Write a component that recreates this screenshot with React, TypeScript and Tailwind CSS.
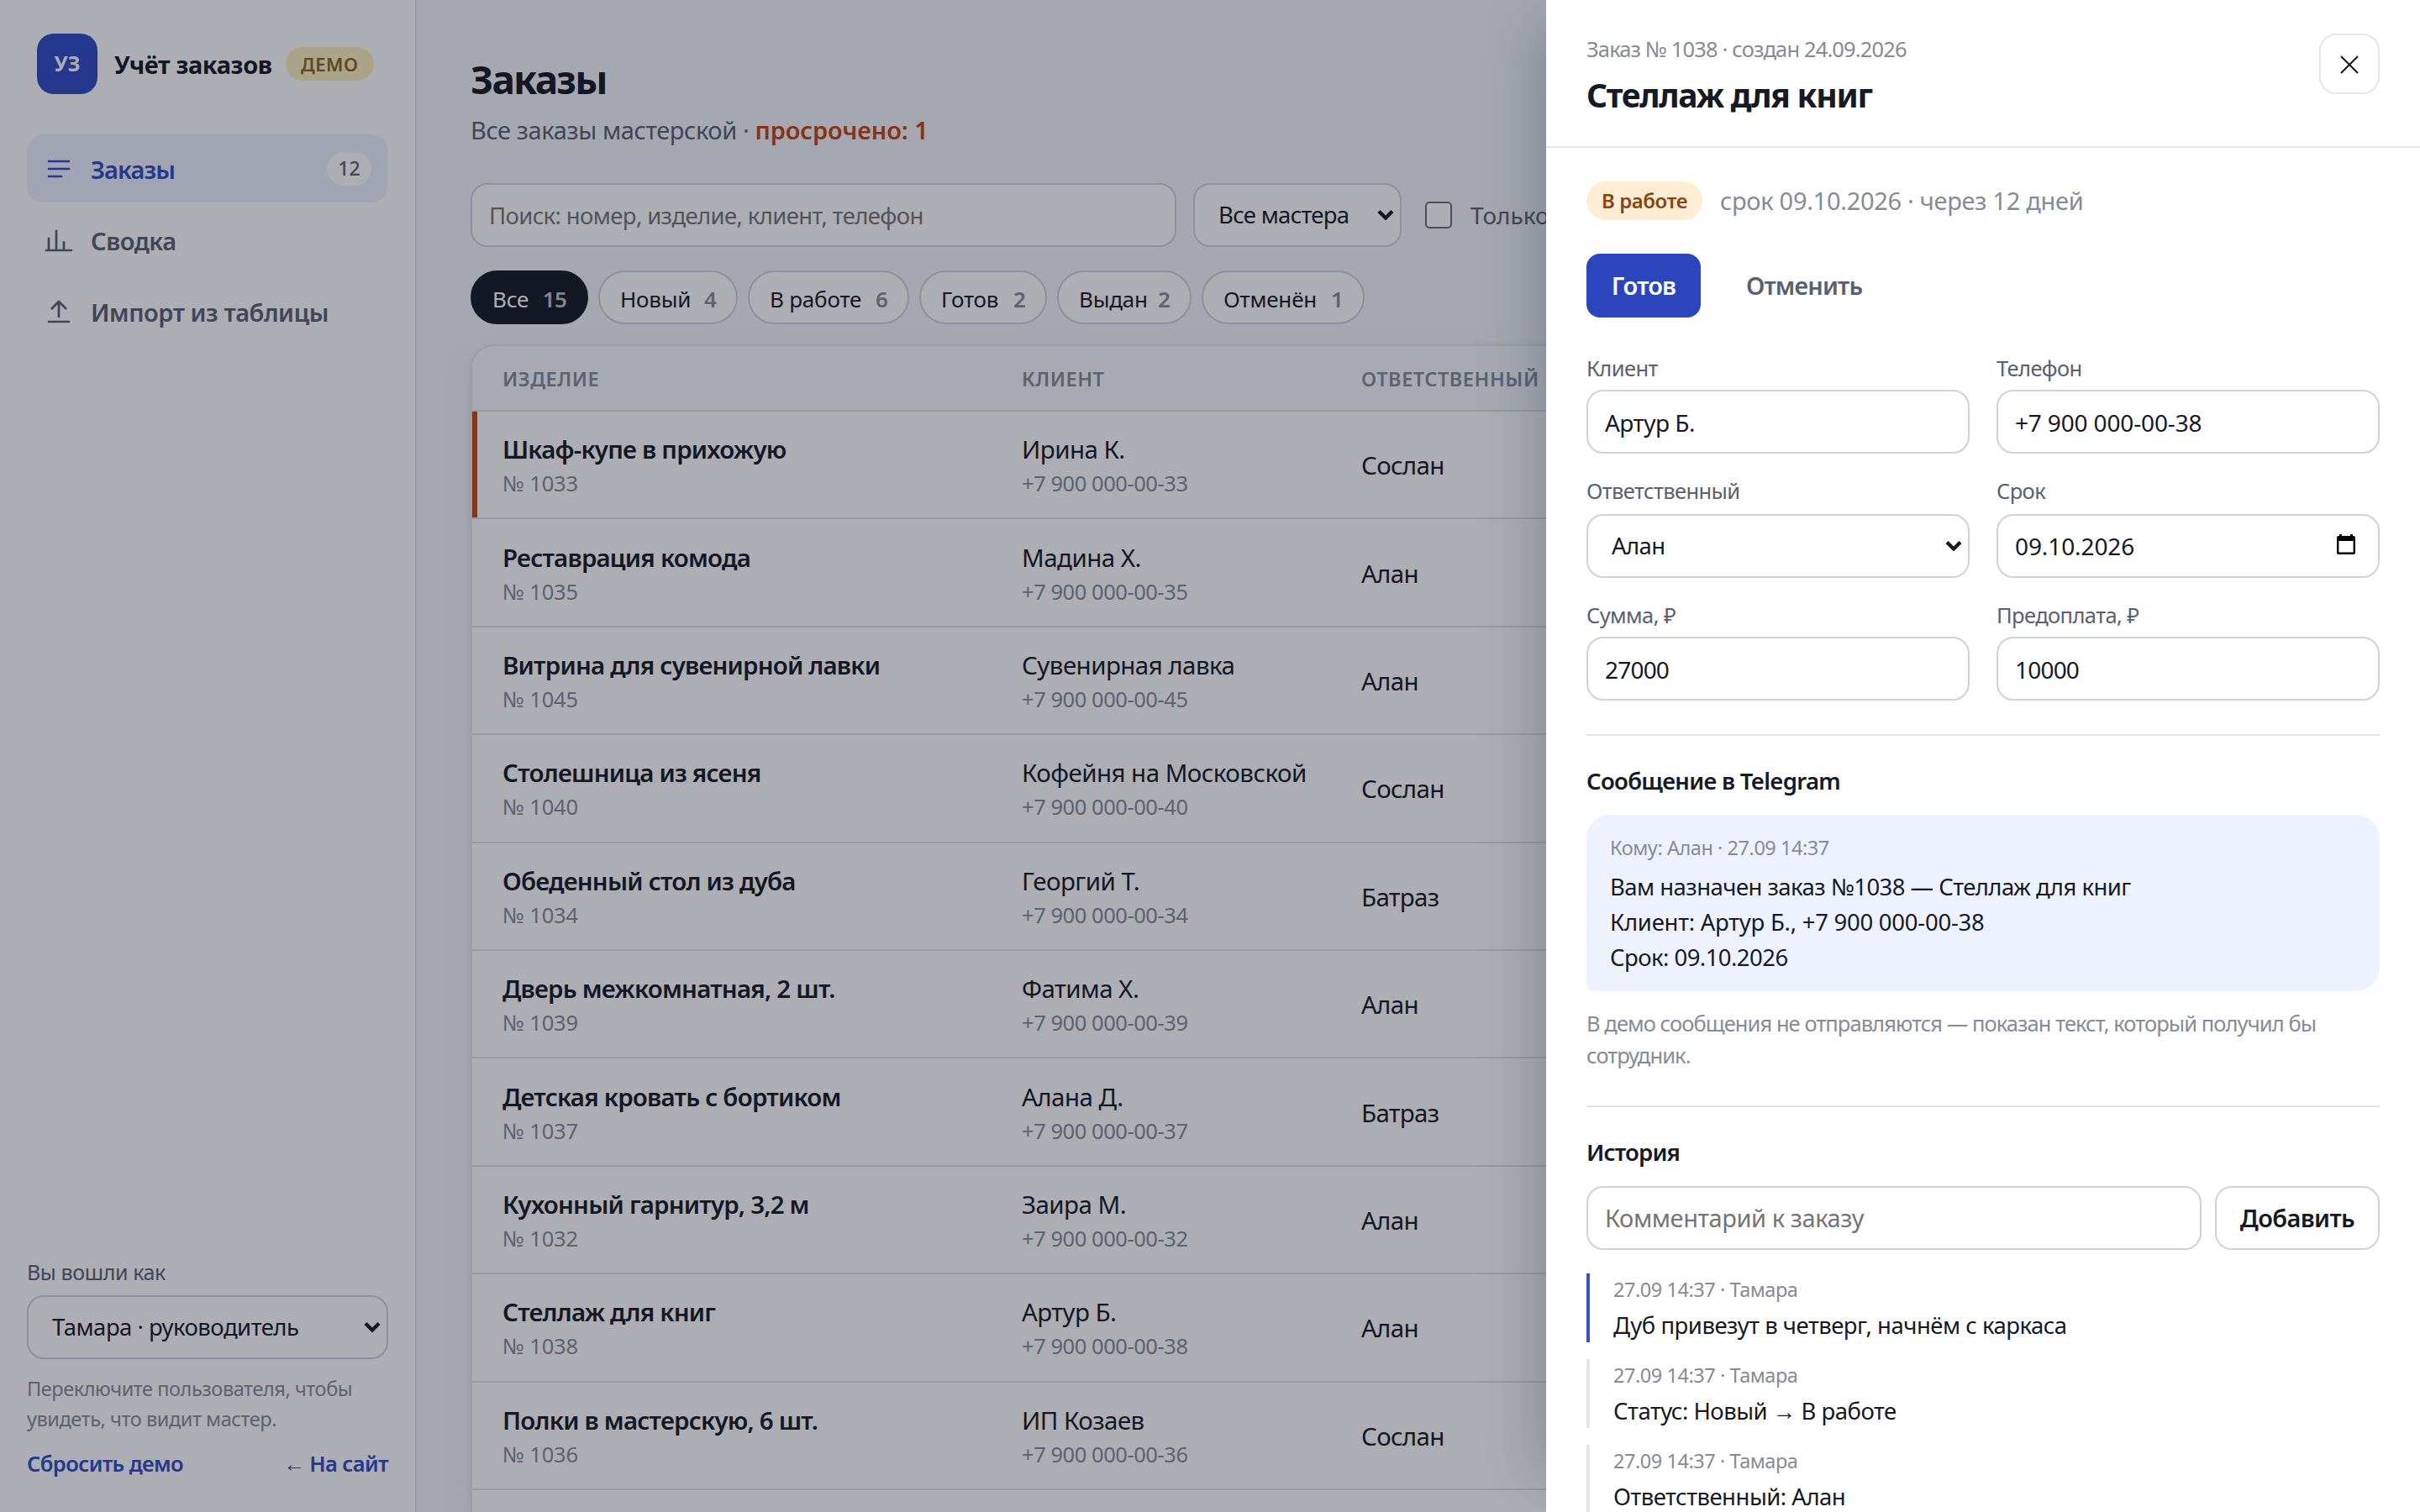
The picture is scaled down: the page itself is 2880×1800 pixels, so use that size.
import type { ReactNode } from "react";
import clsx from "clsx";

const chips = [
  { label: "Все", count: 15, width: "w-[140px]", active: true },
  { label: "Новый", count: 4, width: "w-[166px]" },
  { label: "В работе", count: 6, width: "w-[192px]" },
  { label: "Готов", count: 2, width: "w-[152px]" },
  { label: "Выдан", count: 2, width: "w-[160px]" },
  { label: "Отменён", count: 1, width: "w-[194px]" },
];

const orders = [
  { id: 1033, title: "Шкаф-купе в прихожую", client: "Ирина К.", master: "Сослан", overdue: true },
  { id: 1035, title: "Реставрация комода", client: "Мадина Х.", master: "Алан" },
  { id: 1045, title: "Витрина для сувенирной лавки", client: "Сувенирная лавка", master: "Алан" },
  { id: 1040, title: "Столешница из ясеня", client: "Кофейня на Московской", master: "Сослан" },
  { id: 1034, title: "Обеденный стол из дуба", client: "Георгий Т.", master: "Батраз" },
  { id: 1039, title: "Дверь межкомнатная, 2 шт.", client: "Фатима Х.", master: "Алан" },
  { id: 1037, title: "Детская кровать с бортиком", client: "Алана Д.", master: "Батраз" },
  { id: 1032, title: "Кухонный гарнитур, 3,2 м", client: "Заира М.", master: "Алан" },
  { id: 1038, title: "Стеллаж для книг", client: "Артур Б.", master: "Алан" },
  { id: 1036, title: "Полки в мастерскую, 6 шт.", client: "ИП Козаев", master: "Сослан" },
];

const history = [
  { text: "Дуб привезут в четверг, начнём с каркаса", comment: true },
  { text: "Статус: Новый → В работе" },
  { text: "Ответственный: Алан" },
];

function NavIcon({ d }: { d: string }) {
  return (
    <svg viewBox="0 0 24 24" className="w-9 h-9 shrink-0" fill="none" stroke="currentColor" strokeWidth="1.8" strokeLinecap="round" strokeLinejoin="round">
      <path d={d} />
    </svg>
  );
}

function NavItem({ icon, label, count, active }: { icon: string; label: string; count?: number; active?: boolean }) {
  return (
    <a
      className={clsx(
        "flex items-center gap-5 h-[81px] px-5 rounded-[20px] text-[29px] font-semibold",
        active ? "bg-[#edf0fd] text-[#304bc4] tracking-[-0.9px]" : "text-[#5a6070] tracking-[-0.45px]",
      )}
    >
      <NavIcon d={icon} />
      <span className="pt-0.5">{label}</span>
      {count && (
        <span className="ml-auto flex items-center justify-center w-[53px] h-10 rounded-full bg-white text-[23px] font-medium tracking-normal text-[#5a6070]">
          {count}
        </span>
      )}
    </a>
  );
}

function Select({ value, className }: { value: string; className?: string }) {
  return (
    <div className={clsx("flex items-center justify-between h-[76px] pl-[28px] pr-[7px] border-2 border-[#cfd1dd] rounded-[20px] bg-white text-[27.5px]", className)}>
      <span>{value}</span>
      <svg viewBox="0 0 20 14" className="w-5 h-3.5" fill="none" stroke="currentColor" strokeWidth="4.4">
        <path d="M2 2.5l8 8 8-8" />
      </svg>
    </div>
  );
}

function Sidebar() {
  return (
    <aside className="flex flex-col w-[496px] shrink-0 h-full px-8 pt-10 pb-10 bg-white border-r-2 border-[#e3e5ea]">
      <div className="flex items-center h-[72px] pl-3">
        <div className="flex items-center justify-center w-[72px] h-[72px] rounded-[20px] bg-[#304bc4] text-white text-[25px] font-bold">УЗ</div>
        <span className="ml-5 pt-px text-[29px] font-bold tracking-[-0.4px] whitespace-nowrap">Учёт заказов</span>
        <span className="ml-4 flex items-center justify-center w-[105px] h-10 shrink-0 rounded-full bg-[#fdeebb] text-[#8a6410] text-[22px] font-semibold tracking-[0.5px]">
          ДЕМО
        </span>
      </div>
      <nav className="mt-12 flex flex-col gap-1">
        <NavItem icon="M4 6h16M4 12h16M4 18h10" label="Заказы" count={12} active />
        <NavItem icon="M2 20h20M4 20v-9.5M10 20V4.5M16 20v-6.5" label="Сводка" />
        <NavItem icon="M12 16V4M6.5 9.5L12 4l5.5 5.5M4 20h16" label="Импорт из таблицы" />
      </nav>
      <div className="mt-auto">
        <p className="text-[25px] leading-[36px] tracking-[-0.4px] text-[#5a6070]">Вы вошли как</p>
        <Select value="Тамара · руководитель" className="mt-2.5 tracking-[-0.5px]" />
        <p className="mt-[17px] text-[23.5px] leading-[36px] tracking-[-0.43px] text-[#868b96]">
          Переключите пользователя, чтобы увидеть, что видит мастер.
        </p>
        <div className="mt-[17px] flex justify-between text-[25.5px] leading-[36px] font-semibold tracking-[-0.6px] text-[#304bc4]">
          <a>Сбросить демо</a>
          <a>← На сайт</a>
        </div>
      </div>
    </aside>
  );
}

function OrdersPage() {
  return (
    <main className="flex flex-col flex-1 min-w-0 h-full pl-16 pr-16 pt-16">
      <h1 className="text-[46px] leading-[60px] font-bold tracking-[-1.8px]">Заказы</h1>
      <p className="mt-[9px] text-[29px] leading-[44px] tracking-[-0.4px] text-[#5a6070]">
        Все заказы мастерской · <span className="font-semibold tracking-[-0.1px] text-[#c8420f]">просрочено: 1</span>
      </p>

      <div className="mt-[41px] flex items-center h-[76px] shrink-0">
        <input
          placeholder="Поиск: номер, изделие, клиент, телефон"
          className="w-[840px] h-[76px] px-5 border-2 border-[#cfd1dd] rounded-[20px] bg-white text-[27.5px] tracking-[-0.63px] placeholder:text-[#757575]"
        />
        <Select value="Все мастера" className="ml-5 w-[248px] tracking-[-0.7px]" />
        <label className="ml-7 flex items-center gap-[22px] text-[28px] text-[#5a6070]">
          <input type="checkbox" className="appearance-none w-8 h-8 border-[2.5px] border-[#6b6b72] rounded-[5px] bg-white" />
          Только
        </label>
      </div>

      <div className="mt-7 flex gap-3 h-16 shrink-0">
        {chips.map((c) => (
          <button
            key={c.label}
            className={clsx(
              "flex items-center justify-between px-6 pt-[5px] border-2 rounded-full text-[26px] whitespace-nowrap",
              c.width,
              c.active ? "bg-[#161a24] border-[#161a24] text-white" : "bg-white border-[#cfd1dd]",
            )}
          >
            <span className="tracking-[-0.2px]">{c.label}</span>
            <span className={clsx("font-semibold tracking-[-0.8px]", c.active ? "text-[#bfc1c8]" : "text-[#868b96]")}>{c.count}</span>
          </button>
        ))}
      </div>

      <div className="mt-6 flex-1 min-h-0 overflow-hidden border-2 border-b-0 border-[#e3e5ea] rounded-t-[28px] bg-white shadow-[0_2px_6px_rgba(16,24,40,0.06),0_16px_48px_rgba(16,24,40,0.06)]">
        <div className="grid grid-cols-[618px_404px_1fr] items-center h-[78px] pt-[3px] pl-9 border-b-2 border-[#dfe1e8] bg-[#f8f9fc] text-[23.5px] font-semibold tracking-[0.55px] text-[#868b96]">
          <span>ИЗДЕЛИЕ</span>
          <span>КЛИЕНТ</span>
          <span>ОТВЕТСТВЕННЫЙ</span>
        </div>
        {orders.map((o) => (
          <div
            key={o.id}
            className={clsx(
              "grid grid-cols-[618px_404px_1fr] items-center h-[128.4px] pl-9 pt-0.5 border-b-2 border-[#dfe1e8] text-[29.5px] leading-[40px]",
              o.overdue && "shadow-[inset_6px_0_0_#c8420f]",
            )}
          >
            <div>
              <p className="font-semibold tracking-[-0.8px]">{o.title}</p>
              <p className="mt-0.5 text-[25.5px] leading-[36px] tracking-[-0.2px] text-[#868b96]">№ {o.id}</p>
            </div>
            <div>
              <p className="tracking-[-0.55px]">{o.client}</p>
              <p className="mt-0.5 text-[25.5px] leading-[36px] tracking-[-0.45px] text-[#868b96]">+7 900 000-00-{o.id - 1000}</p>
            </div>
            <span className="tracking-[-0.7px]">{o.master}</span>
          </div>
        ))}
      </div>
    </main>
  );
}

function Field({ label, className, children }: { label: string; className?: string; children: ReactNode }) {
  return (
    <label className={clsx("flex flex-col justify-between text-[25.5px] leading-[36px] tracking-[-0.6px] text-[#5a6070]", className)}>
      {label}
      {children}
    </label>
  );
}

const inputClass =
  "w-full h-[76px] px-5 border-2 border-[#cfd1dd] rounded-[20px] bg-white text-[28px] text-[#161a24]";

function OrderDrawer() {
  return (
    <section className="absolute inset-y-0 right-0 w-[1040px] overflow-hidden bg-white">
      <header className="flex justify-between h-[176px] px-12 pt-[39px] border-b-2 border-[#e3e5e8]">
        <div>
          <p className="text-[25.5px] leading-[38px] tracking-[-0.87px] text-[#868b96]">Заказ № 1038 · создан 24.09.2026</p>
          <h2 className="mt-2.5 text-[39px] leading-[52px] font-bold tracking-[-1.3px]">Стеллаж для книг</h2>
        </div>
        <button className="mt-px flex items-center justify-center w-[72px] h-[72px] pt-0.5 border-2 border-[#e3e5e8] rounded-[20px]" aria-label="Закрыть">
          <svg viewBox="0 0 24 24" className="w-6 h-6" fill="none" stroke="currentColor" strokeWidth="2.1">
            <path d="M2 2l20 20M22 2L2 22" />
          </svg>
        </button>
      </header>

      <div className="px-12 pt-10">
        <div className="flex items-center gap-[21px] h-[46px]">
          <span className="flex items-center justify-center w-[138px] h-[46px] rounded-full bg-[#fdeed3] text-[#8a4413] text-[24px] font-semibold tracking-[-0.4px]">
            В работе
          </span>
          <span className="text-[29px] tracking-[-0.3px] text-[#868b96]">срок 09.10.2026 · через 12 дней</span>
        </div>

        <div className="mt-10 flex gap-5 h-[76px] text-[29px] font-semibold tracking-[-0.85px]">
          <button className="w-[136px] rounded-[16px] bg-[#2b46bd] text-white">Готов</button>
          <button className="pl-[34px] text-[#5a6070]">Отменить</button>
        </div>

        <div className="mt-[42px] grid grid-cols-2 grid-rows-[120px_122px_120px] gap-x-8 gap-y-[26px]">
          <Field label="Клиент">
            <input defaultValue="Артур Б." className={clsx(inputClass, "pt-0.5 tracking-[-0.5px]")} />
          </Field>
          <Field label="Телефон">
            <input defaultValue="+7 900 000-00-38" className={clsx(inputClass, "pt-0.5 tracking-[-0.15px]")} />
          </Field>
          <Field label="Ответственный">
            <Select value="Алан" className="text-[#161a24]" />
          </Field>
          <Field label="Срок">
            <div className={clsx(inputClass, "flex items-center justify-between tracking-[-0.1px]")}>
              <span>09.10.2026</span>
              <svg viewBox="0 0 24 26" className="w-6 h-[26px] mr-1.5 mb-1">
                <path fillRule="evenodd" d="M4 1h3v2h10V1h3v2h1a2 2 0 0 1 2 2v18a2 2 0 0 1-2 2H3a2 2 0 0 1-2-2V5a2 2 0 0 1 2-2h1zM3.4 9v13.6h17.2V9z" fill="#000" />
              </svg>
            </div>
          </Field>
          <Field label="Сумма, ₽">
            <input defaultValue="27000" className={clsx(inputClass, "pt-0.5 tracking-[-0.8px]")} />
          </Field>
          <Field label="Предоплата, ₽">
            <input defaultValue="10000" className={clsx(inputClass, "pt-0.5 tracking-[-0.8px]")} />
          </Field>
        </div>

        <div className="mt-10 border-t-2 border-[#e3e5e8] pt-[34px]">
          <h3 className="text-[27.5px] leading-[40px] font-semibold tracking-[-0.7px]">Сообщение в Telegram</h3>
          <div className="mt-5 h-[210px] px-7 pt-[21px] bg-[#eef2ff] rounded-[28px] rounded-bl-[8px]">
            <p className="text-[23.5px] leading-[36px] tracking-[-0.45px] text-[#868b96]">Кому: Алан · 27.09 14:37</p>
            <p className="mt-2 text-[27.5px] leading-[42px] tracking-[-0.55px]">Вам назначен заказ №1038 — Стеллаж для книг</p>
            <p className="text-[27.5px] leading-[42px] tracking-[-0.25px]">Клиент: Артур Б., +7 900 000-00-38</p>
            <p className="text-[27.5px] leading-[42px] tracking-[-0.55px]">Срок: 09.10.2026</p>
          </div>
          <p className="mt-[19px] text-[25.5px] leading-[38px] tracking-[-0.93px] text-[#868b96]">
            В демо сообщения не отправляются — показан текст, который получил бы сотрудник.
          </p>
        </div>

        <div className="mt-[41px] border-t-2 border-[#e3e5e8] pt-[34px]">
          <h3 className="text-[27.5px] leading-[40px] font-semibold tracking-[-0.85px]">История</h3>
          <div className="mt-5 flex gap-4 h-[76px]">
            <input
              placeholder="Комментарий к заказу"
              className="flex-1 min-w-0 px-5 border-2 border-[#cfd1dd] rounded-[20px] text-[29px] tracking-[-0.43px] placeholder:text-[#757575]"
            />
            <button className="w-[196px] border-2 border-[#cfd1dd] rounded-[20px] text-[29px] font-semibold tracking-[-0.6px]">Добавить</button>
          </div>
          <ul className="mt-7 flex flex-col gap-5">
            {history.map((h) => (
              <li key={h.text} className={clsx("h-[82px] pl-7 pt-0.5 border-l-4", h.comment ? "border-[#3653c8]" : "border-[#e3e5e8]")}>
                <p className="text-[23.5px] leading-[34px] tracking-[-0.45px] text-[#868b96]">27.09 14:37 · Тамара</p>
                <p className="mt-[5px] text-[27.5px] leading-[42px] tracking-[-0.5px]">{h.text}</p>
              </li>
            ))}
          </ul>
        </div>
      </div>
    </section>
  );
}

export default function App() {
  return (
    <div className="relative flex w-[2880px] h-[1800px] overflow-hidden bg-[#f5f6fa] font-['Noto_Sans',sans-serif] text-[#161a24]">
      <Sidebar />
      <OrdersPage />
      <div className="absolute inset-0 bg-[rgba(16,24,40,0.35)]" />
      <div className="absolute top-[30px] bottom-[42px] right-0 w-[1040px] shadow-[0_0_72px_rgba(16,24,40,0.3)]" />
      <OrderDrawer />
    </div>
  );
}
